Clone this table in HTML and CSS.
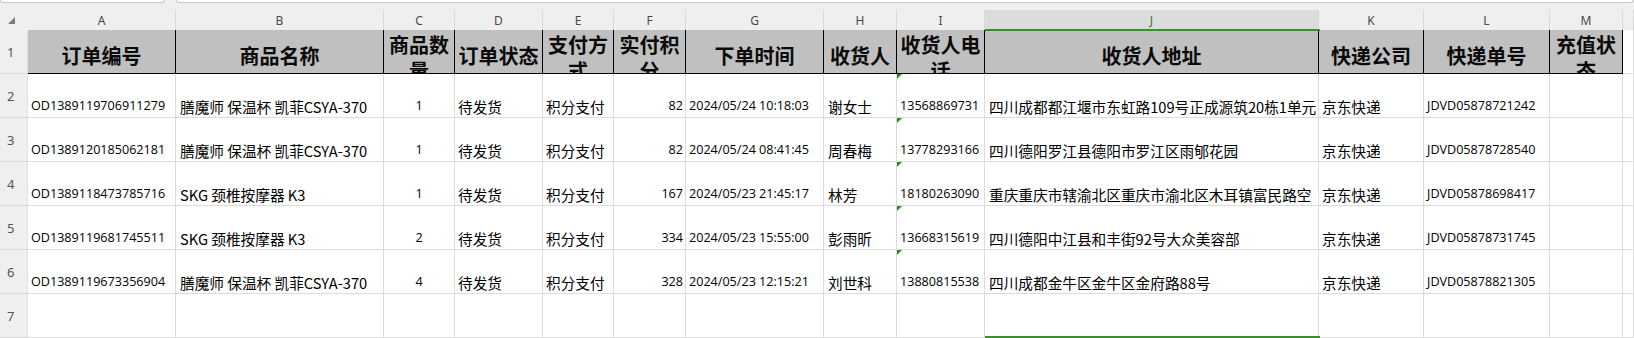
FILE: index.html
```html
<!DOCTYPE html>
<html lang="zh-CN">
<head>
<meta charset="utf-8">
<title>订单表</title>
<link rel="stylesheet" href="styles.css">
</head>
<body>
<div class="app">
  <div class="topbar">
    <div class="box name"></div>
    <div class="box formula"></div>
  </div>
  <div class="sheet">
    <div class="ch corner"><svg width="7" height="7" viewBox="0 0 7 7"><polygon points="7,0 7,7 0,7" fill="#7a7a7a"/></svg></div>
    <div class="ch">A</div><div class="ch">B</div><div class="ch">C</div><div class="ch">D</div><div class="ch">E</div><div class="ch">F</div><div class="ch">G</div><div class="ch">H</div><div class="ch">I</div><div class="ch sel">J</div><div class="ch">K</div><div class="ch">L</div><div class="ch">M</div><div class="ch"></div>

    <div class="rh">1</div>
    <div class="h">订单编号</div>
    <div class="h">商品名称</div>
    <div class="h w">商品数量</div>
    <div class="h">订单状态</div>
    <div class="h w">支付方式</div>
    <div class="h w">实付积分</div>
    <div class="h">下单时间</div>
    <div class="h">收货人</div>
    <div class="h w">收货人电话</div>
    <div class="h">收货人地址</div>
    <div class="h">快递公司</div>
    <div class="h">快递单号</div>
    <div class="h w">充值状态</div>
    <div class="d"></div>

    <div class="rh">2</div>
    <div class="d n">OD1389119706911279</div>
    <div class="d p4">膳魔师 保温杯 凯菲CSYA-370</div>
    <div class="d n c">1</div>
    <div class="d">待发货</div>
    <div class="d">积分支付</div>
    <div class="d n r">82</div>
    <div class="d n">2024/05/24 10:18:03</div>
    <div class="d p4">谢女士</div>
    <div class="d n tri">13568869731</div>
    <div class="d p4">四川成都都江堰市东虹路109号正成源筑20栋1单元</div>
    <div class="d">京东快递</div>
    <div class="d n">JDVD05878721242</div>
    <div class="d"></div>
    <div class="d"></div>

    <div class="rh">3</div>
    <div class="d n">OD1389120185062181</div>
    <div class="d p4">膳魔师 保温杯 凯菲CSYA-370</div>
    <div class="d n c">1</div>
    <div class="d">待发货</div>
    <div class="d">积分支付</div>
    <div class="d n r">82</div>
    <div class="d n">2024/05/24 08:41:45</div>
    <div class="d p4">周春梅</div>
    <div class="d n tri">13778293166</div>
    <div class="d p4">四川德阳罗江县德阳市罗江区雨郇花园</div>
    <div class="d">京东快递</div>
    <div class="d n">JDVD05878728540</div>
    <div class="d"></div>
    <div class="d"></div>

    <div class="rh">4</div>
    <div class="d n">OD1389118473785716</div>
    <div class="d p4">SKG 颈椎按摩器 K3</div>
    <div class="d n c">1</div>
    <div class="d">待发货</div>
    <div class="d">积分支付</div>
    <div class="d n r">167</div>
    <div class="d n">2024/05/23 21:45:17</div>
    <div class="d p4">林芳</div>
    <div class="d n tri">18180263090</div>
    <div class="d p4">重庆重庆市辖渝北区重庆市渝北区木耳镇富民路空</div>
    <div class="d">京东快递</div>
    <div class="d n">JDVD05878698417</div>
    <div class="d"></div>
    <div class="d"></div>

    <div class="rh">5</div>
    <div class="d n">OD1389119681745511</div>
    <div class="d p4">SKG 颈椎按摩器 K3</div>
    <div class="d n c">2</div>
    <div class="d">待发货</div>
    <div class="d">积分支付</div>
    <div class="d n r">334</div>
    <div class="d n">2024/05/23 15:55:00</div>
    <div class="d p4">彭雨昕</div>
    <div class="d n tri">13668315619</div>
    <div class="d p4">四川德阳中江县和丰街92号大众美容部</div>
    <div class="d">京东快递</div>
    <div class="d n">JDVD05878731745</div>
    <div class="d"></div>
    <div class="d"></div>

    <div class="rh">6</div>
    <div class="d n">OD1389119673356904</div>
    <div class="d p4">膳魔师 保温杯 凯菲CSYA-370</div>
    <div class="d n c">4</div>
    <div class="d">待发货</div>
    <div class="d">积分支付</div>
    <div class="d n r">328</div>
    <div class="d n">2024/05/23 12:15:21</div>
    <div class="d p4">刘世科</div>
    <div class="d n tri">13880815538</div>
    <div class="d p4">四川成都金牛区金牛区金府路88号</div>
    <div class="d">京东快递</div>
    <div class="d n">JDVD05878821305</div>
    <div class="d"></div>
    <div class="d"></div>

    <div class="rh">7</div>
    <div class="d"></div><div class="d"></div><div class="d"></div><div class="d"></div><div class="d"></div><div class="d"></div><div class="d"></div><div class="d"></div><div class="d"></div><div class="d"></div><div class="d"></div><div class="d"></div><div class="d"></div><div class="d"></div>

    <div class="selection"></div>
  </div>
</div>
</body>
</html>
```

FILE: styles.css
```css
* { box-sizing: border-box; }

html, body {
  margin: 0;
  padding: 0;
}

body {
  width: 1634px;
  height: 338px;
  overflow: hidden;
  background: #ffffff;
  font-family: "Noto Sans CJK SC", "Noto Sans", sans-serif;
  color: #000;
}

.topbar {
  height: 10px;
  background: #efefef;
  display: flex;
  gap: 11px;
}

.box {
  height: 3px;
  background: #ffffff;
  border: 1px solid #c6c6c6;
  border-top: none;
  border-radius: 0 0 5px 5px;
}

.box.name { width: 165px; }
.box.formula { flex: 1; }

.sheet {
  position: relative;
  display: grid;
  grid-template-columns: 28px 148px 208px 71px 88px 71px 72px 138px 73px 88px 334px 105px 126px 73px 11px;
  grid-template-rows: 20px repeat(7, 44px);
}

.ch {
  background: #efefef;
  border-right: 1px solid #d8d8d8;
  display: flex;
  align-items: center;
  justify-content: center;
  font-family: "Noto Sans", "DejaVu Sans", sans-serif;
  font-size: 12px;
  color: #4a4a4a;
}

.ch.corner {
  border-right: none;
  justify-content: flex-start;
  align-items: flex-end;
  padding: 0 0 6px 8px;
}

.ch.corner svg { display: block; }

.ch.sel {
  background: #dcdcdc;
  color: #2f7d20;
}

.rh {
  background: #efefef;
  border-right: 1px solid #e2e2e2;
  border-bottom: 1px solid #d8d8d8;
  display: flex;
  align-items: center;
  padding-left: 7px;
  font-family: "Noto Sans", "DejaVu Sans", sans-serif;
  font-size: 13px;
  color: #555;
}

.h {
  background: #c0c0c0;
  border-right: 1px solid #000;
  border-bottom: 1px solid #000;
  font-weight: 700;
  font-size: 20px;
  line-height: 26px;
  text-align: center;
  overflow: hidden;
  padding: 13px 0 0;
  color: #0a0a0a;
}

.h.w { padding-top: 2px; }

.d {
  position: relative;
  border-right: 1px solid #dcdcdc;
  border-bottom: 1px solid #dcdcdc;
  display: flex;
  align-items: flex-end;
  padding: 0 3px 1px;
  white-space: nowrap;
  overflow: hidden;
  font-size: 14.67px;
  line-height: 18px;
  color: #000;
}

.d.n {
  font-family: "Open Sans", "Liberation Sans", sans-serif;
  font-size: 12.6px;
  padding-bottom: 2px;
}

.d.p4 { padding-left: 4px; }
.d.c { justify-content: center; }
.d.r { justify-content: flex-end; padding-right: 2px; }

.d.tri::before {
  content: "";
  position: absolute;
  top: 0;
  left: 0;
  border-top: 5px solid #2f8a22;
  border-right: 5px solid transparent;
}

.selection {
  position: absolute;
  left: 985px;
  top: 19px;
  width: 335px;
  height: 309px;
  border-top: 2px solid #3c8f2c;
  border-bottom: 2px solid #3c8f2c;
  pointer-events: none;
}
```
